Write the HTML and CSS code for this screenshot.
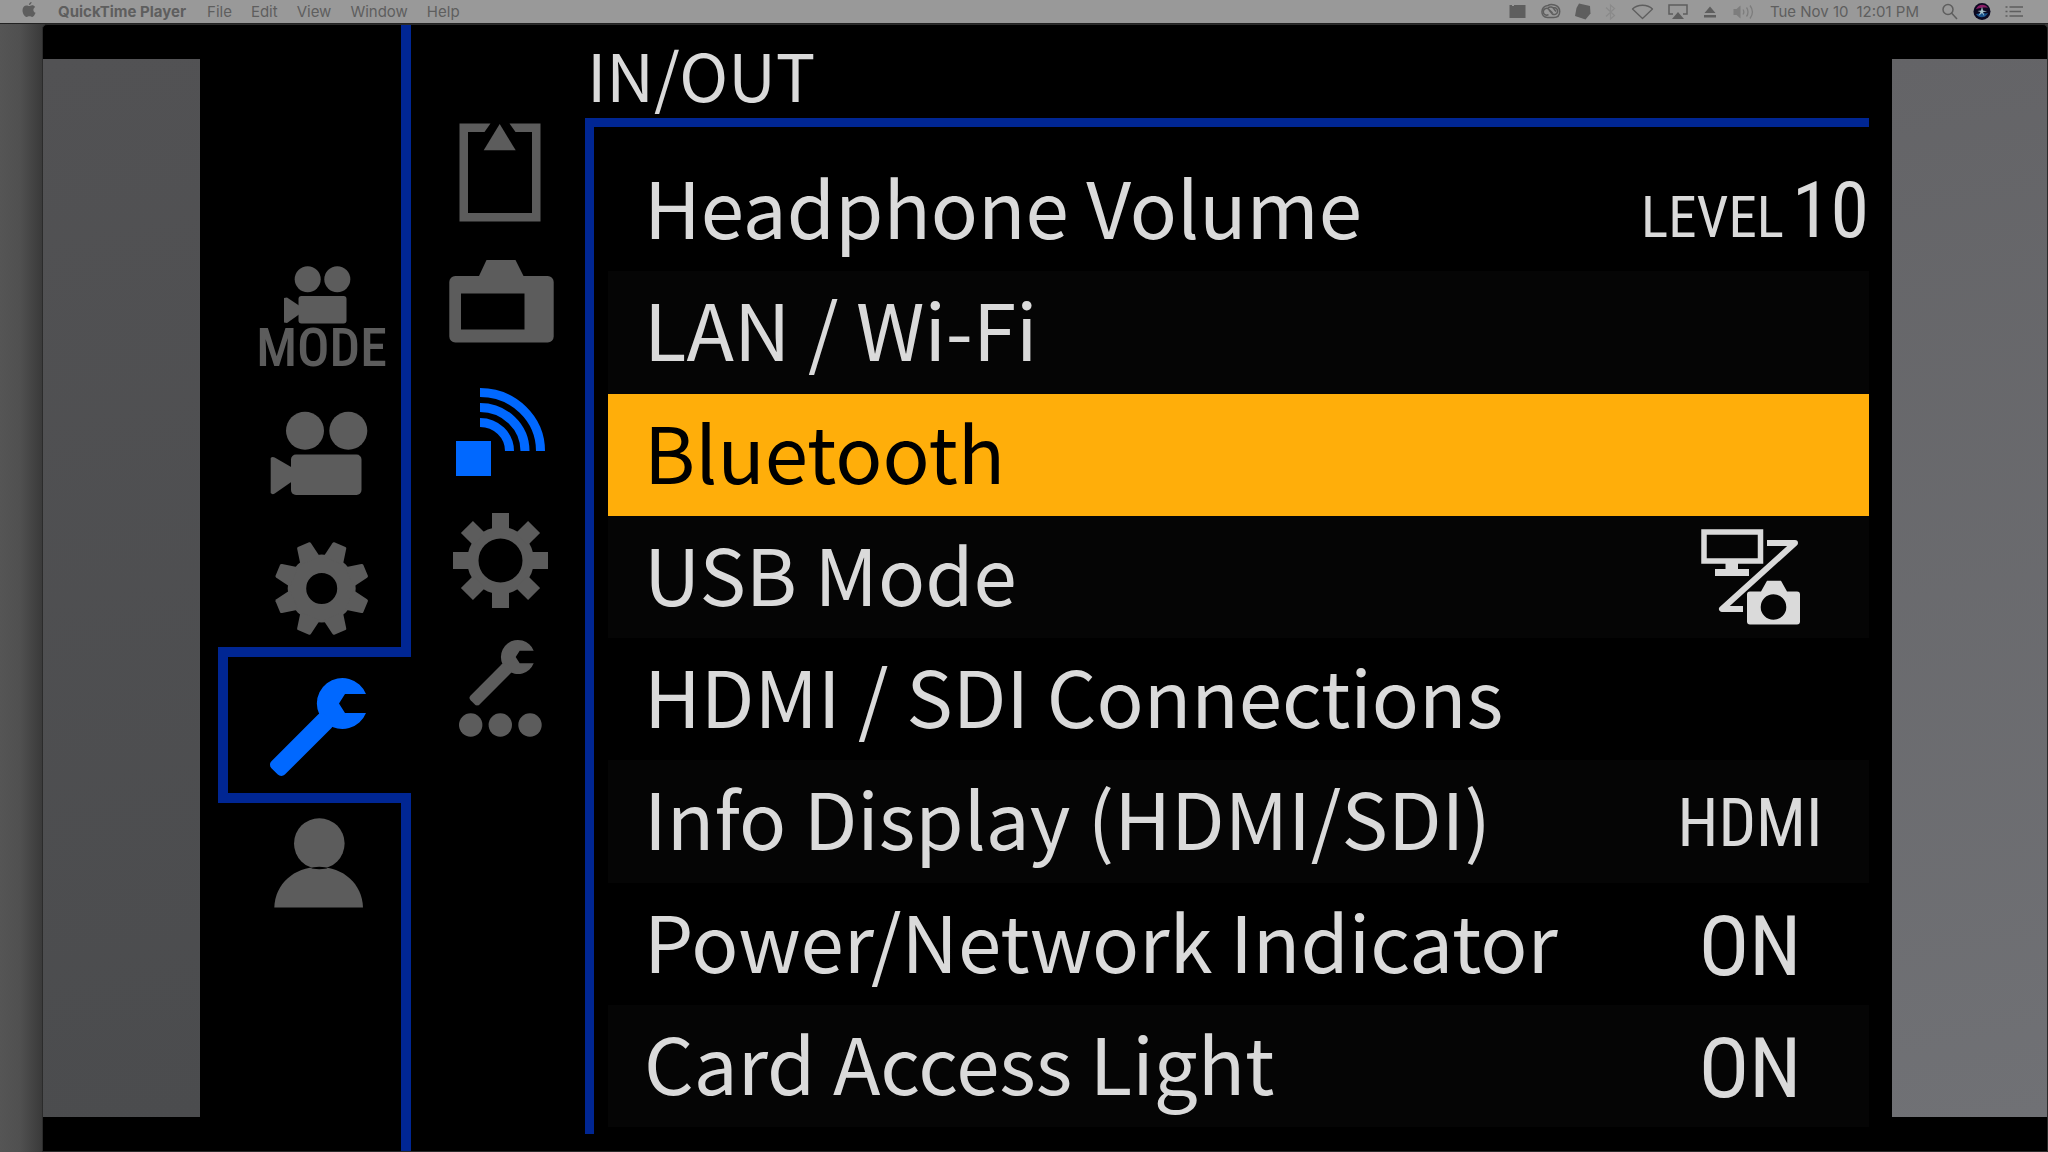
FILE: index.html
```html
<!DOCTYPE html>
<html lang="en">
<head>
<meta charset="utf-8">
<title>QuickTime Player</title>
<link rel="stylesheet" href="styles.css">
</head>
<body>
<svg class="defs" aria-hidden="true">
  <symbol id="wrench" viewBox="0 0 106 106">
    <path d="M101.500 23.500 A25.500 25.500 0 1 0 101.500 42.500 L80.500 42.500 L74.500 33 L80.500 23.500 Z"/>
    <rect x="20" y="-9.500" width="76" height="19" rx="5" transform="translate(78 33) rotate(135)"/>
  </symbol>
</svg>

<header class="menubar">
  <nav class="menus" aria-label="Menu bar">
    <button class="apple" aria-label="Apple">
      <svg width="14" height="18" viewBox="0 0 14 18"><path d="M9.600 1c.1 1.500-1.200 3-2.700 3-.1-1.500 1.200-2.900 2.700-3zM7.200 5c.7 0 1.500-.8 2.900-.8 1.200 0 2.400.7 3 1.700-2.500 1.500-2.100 4.900.5 5.900-.6 1.700-2 4.100-3.400 4.100-1.100 0-1.500-.7-2.800-.7s-1.700.7-2.700.7C2.600 16 .5 12.300.5 9.300.5 6.200 2.400 4.400 4.400 4.400c1.300 0 2.100.6 2.800.6z" fill="currentColor"/></svg>
    </button>
    <button class="app">QuickTime Player</button>
    <button>File</button>
    <button>Edit</button>
    <button>View</button>
    <button>Window</button>
    <button>Help</button>
  </nav>
  <div class="status">
    <svg width="19" height="20" viewBox="0 0 19 20"><path d="M1.500 5H4v1h2V5h11.500v13h-16z" fill="currentColor"/></svg>
    <svg width="21" height="20" viewBox="0 0 21 20" fill="none" stroke="currentColor" stroke-width="1.500"><path d="M8 5.500C10 4.200 19.500 3.500 19.700 11.500c0 3.500-2.200 6-6 6H7.500c-7.500 0-7.500-11 .5-12z"/><path d="M13 8.200c3-1.200 5 1 4.600 3.500-.4 2.600-3.600 3.800-5.600 1.900L9 10M8.500 14.700c-2.500 1.300-5.200-.3-5.200-3 0-2.800 3-4.200 5.200-2.700l4 4M8 8c2-2 5-1 6 1l2 2.500"/></svg>
    <svg width="17" height="20" viewBox="0 0 17 20"><path d="M5 3.500 16 6l.5 7.500-5 6L1 16l1.500-8z" fill="currentColor"/></svg>
    <svg class="faint" width="13" height="20" viewBox="0 0 13 20" fill="none" stroke="currentColor" stroke-width="1.200"><path d="M2 7.500l8.500 8L6.500 19V5l4 3.500-8.500 8"/></svg>
    <svg width="25" height="20" viewBox="0 0 25 20" fill="none" stroke="currentColor" stroke-width="1.300" stroke-linejoin="round"><path d="M2.500 9C7.500 4 17.500 4 22.500 9l-10 9.500z"/></svg>
    <svg width="20" height="20" viewBox="0 0 20 20"><path d="M5 14H1V5h18v9H15" fill="none" stroke="currentColor" stroke-width="1.500"/><path d="M10 12l6 7H4z" fill="currentColor"/></svg>
    <svg width="18" height="20" viewBox="0 0 18 20" fill="currentColor"><path d="M9 6.500l5.500 6.500h-11zM3 15h12v2.500H3z"/></svg>
    <svg class="dim" width="22" height="20" viewBox="0 0 22 20"><path d="M1.500 9h3l4-3.500v13L4.500 15h-3z" fill="currentColor"/><path d="M11 9.500c1 1.500 1 3.500 0 5M14.500 7.500c2 2.500 2 6.500 0 9M18 5.500c3 4 3 9 0 13" fill="none" stroke="currentColor" stroke-width="1.300"/></svg>
    <span class="clock"><span>Tue Nov 10</span><span>12:01 PM</span></span>
    <svg width="20" height="20" viewBox="0 0 20 20" fill="none" stroke="currentColor" stroke-width="1.500"><circle cx="8" cy="9.500" r="5"/><path d="M11.500 13l5.500 6"/></svg>
    <svg width="18" height="20" viewBox="0 0 18 20"><circle cx="9" cy="11.500" r="8.500" fill="#0b0820"/><path d="M3 9c2-5 9-6 12-1-4-1-8 0-12 1z" fill="#8a1c66"/><path d="M3 14c3 0 5-1 6-3 1 2 3 3 6 2-2 5-9 6-12 1z" fill="#17528c"/><path d="M9 6.500l1 4 4 1-4 .5 1.500 4.500L9 13l-3.500 3 2-4-3-1 3.500-.5z" fill="#a9c4cc"/></svg>
    <svg width="20" height="20" viewBox="0 0 20 20" fill="none" stroke="currentColor" stroke-width="1.700"><path d="M1.500 7h2M5.500 7H19M1.500 11.500h2M5.500 11.500H17M1.500 16h2M5.500 16H19"/></svg>
  </div>
</header>

<main class="desktop">
  <section class="player">
    <div class="backdrop backdrop-left"></div>

    <nav class="rail" aria-label="Menus">
      <div class="rail-space"></div>
      <button class="tab tab-mode">
        <svg width="159" height="86" viewBox="242 240 159 86" fill="currentColor"><circle cx="307.700" cy="279.300" r="13"/><circle cx="337.300" cy="279.300" r="13"/><rect x="298.500" y="296" width="48" height="27.500" rx="3"/><path d="M284 298l3-.5 12 8v9l-12 8.500-3-.5z"/></svg>
        <span>MODE</span>
      </button>
      <button class="tab" aria-label="Video recording">
        <svg width="159" height="130" viewBox="242 388 159 130" fill="currentColor"><circle cx="305" cy="430.700" r="19"/><circle cx="348.300" cy="430.700" r="19"/><rect x="291" y="454.500" width="70.500" height="40.500" rx="5"/><path d="M270.700 458q1.300-1.500 4-.5L292 467.500v14L274.700 493.500q-2.500 1.500-4-.5z"/></svg>
      </button>
      <button class="tab" aria-label="Custom settings">
        <svg width="159" height="129" viewBox="-79.700 -70.500 159 129" fill="currentColor">
          <path fill-rule="evenodd" d="M-34 0a34 34 0 1 0 68 0a34 34 0 1 0-68 0zM-15.500 0a15.500 15.500 0 1 1 31 0a15.500 15.500 0 1 1-31 0z"/>
          <g id="teeth-a"><path id="tooth-a" transform="rotate(22.500)" d="M-10.500-30L-7.500-46q.3-1.500 1.500-1.500H6q1.200 0 1.500 1.500L10.500-30z"/><use href="#tooth-a" transform="rotate(45)"/><use href="#tooth-a" transform="rotate(90)"/><use href="#tooth-a" transform="rotate(135)"/></g>
          <use href="#teeth-a" transform="rotate(180)"/>
        </svg>
      </button>
      <button class="tab tab-active" aria-label="Setup" aria-current="true">
        <svg width="159" height="136" viewBox="242 657 159 136" fill="currentColor"><use href="#wrench" x="264.500" y="670.500" width="106" height="106"/></svg>
      </button>
      <button class="tab" aria-label="My menu">
        <svg width="159" height="122" viewBox="242 803 159 122" fill="currentColor"><circle cx="319.300" cy="843.500" r="25.300"/><path d="M274.300 907.500C275 884 294 867 318.700 867S362.300 884 363 907.500z"/><ellipse cx="319.300" cy="868" rx="8" ry="1.200" fill="#000"/></svg>
      </button>
      <div class="rail-space rail-rest"></div>
    </nav>

    <nav class="sections" aria-label="Setup sections">
      <button aria-label="Memory card">
        <svg width="174" height="132" viewBox="411 108 174 132" fill="currentColor"><path d="M459.500 123.500h31l-6 8.500H468v81h64v-81h-16.500l-6-8.500h31v98h-81z"/><path d="M499.700 124l16 26.300h-32z"/></svg>
      </button>
      <button aria-label="Camera display">
        <svg width="174" height="126" viewBox="411 240 174 126" fill="currentColor"><path fill-rule="evenodd" d="M455.300 276H479l7.500-16h29l8 16h24.200a6 6 0 0 1 6 6v54.500a6 6 0 0 1-6 6h-92.400a6 6 0 0 1-6-6V282a6 6 0 0 1 6-6zM461 293.500v36h63.500v-36z"/></svg>
      </button>
      <button class="current" aria-label="In/Out" aria-current="true">
        <svg width="174" height="128" viewBox="411 366 174 128"><path d="M456 441h35v35h-35z" fill="currentColor"/><path d="M480 392.500A60.500 58.500 0 0 1 540.500 451M480 407.500A45 43.500 0 0 1 525 451M480 422.500A29.500 28.500 0 0 1 509.500 451" fill="none" stroke="currentColor" stroke-width="9"/></svg>
      </button>
      <button aria-label="Operation">
        <svg width="174" height="128" viewBox="-89.500 -66.500 174 128" fill="currentColor">
          <path fill-rule="evenodd" d="M-33.500 0a33.500 33.500 0 1 0 67 0a33.500 33.500 0 1 0-67 0zM-22 0a22 22 0 1 1 44 0a22 22 0 1 1-44 0z"/>
          <g id="teeth-b"><path id="tooth-b" d="M-8.500-30V-47.500h17V-30z"/><use href="#tooth-b" transform="rotate(45)"/><use href="#tooth-b" transform="rotate(90)"/><use href="#tooth-b" transform="rotate(135)"/></g>
          <use href="#teeth-b" transform="rotate(180)"/>
        </svg>
      </button>
      <button aria-label="Other settings">
        <svg width="174" height="128" viewBox="411 622 174 128" fill="currentColor"><use href="#wrench" x="466" y="635" width="70.700" height="70.700"/><circle cx="470.700" cy="725" r="11.700"/><circle cx="500.300" cy="725" r="11.700"/><circle cx="530" cy="725" r="11.700"/></svg>
      </button>
    </nav>

    <section class="panel">
      <h1>IN/OUT</h1>
      <div class="list">
        <button class="row"><span class="label">Headphone Volume</span><span class="value level"><small>LEVEL</small>10</span></button>
        <button class="row"><span class="label">LAN / Wi-Fi</span></button>
        <button class="row selected"><span class="label">Bluetooth</span></button>
        <button class="row"><span class="label">USB Mode</span><span class="value symbol">
          <svg width="104" height="100" viewBox="1698 527 104 100" role="img" aria-label="Computer / camera"><g fill="none" stroke="currentColor"><path d="M1704 532h56.500v29H1704z" stroke-width="5.500"/><path d="M1767 543h28l-73 66h21" stroke-width="6" stroke-linejoin="round"/></g><path d="M1725.500 562h12.500v7h11v7h-34v-7h10.500z" fill="currentColor"/><path fill-rule="evenodd" fill="currentColor" d="M1750 591.400h11l6-10.700h14l6 10.700h10a3 3 0 0 1 3 3v27.200a3 3 0 0 1-3 3h-47a3 3 0 0 1-3-3v-27.200a3 3 0 0 1 3-3zM1760.700 607a12.800 12.800 0 1 0 25.600 0a12.800 12.800 0 1 0-25.600 0z"/></svg></span></button>
        <button class="row"><span class="label">HDMI / SDI Connections</span></button>
        <button class="row"><span class="label">Info Display (HDMI/SDI)</span><span class="value narrow">HDMI</span></button>
        <button class="row"><span class="label">Power/Network Indicator</span><span class="value">ON</span></button>
        <button class="row"><span class="label">Card Access Light</span><span class="value">ON</span></button>
      </div>
    </section>

    <div class="backdrop backdrop-right"></div>
  </section>
</main>
</body>
</html>
```
FILE: styles.css
```css
* { box-sizing: border-box; }

body {
  margin: 0;
  min-height: 100vh;
  display: flex;
  flex-direction: column;
  background: #000;
  font-family: "Noto Sans CJK JP", "Noto Sans", sans-serif;
}

button {
  margin: 0;
  padding: 0;
  border: 0;
  background: none;
  color: inherit;
  font: inherit;
  text-align: left;
}

svg { display: block; flex: none; }
.defs { position: absolute; width: 0; height: 0; }

/* System menu bar */
.menubar {
  height: 24px;
  display: flex;
  justify-content: space-between;
  padding: 0 24px 0 22px;
  background: #999;
  border-bottom: 1px solid #222;
  color: #5e5e5e;
  font-family: Inter, sans-serif;
  font-size: 15px;
  line-height: 23px;
}
.menus { display: flex; gap: 19px; }
.apple { padding: 0 3px 3px 0; }
.app { padding-right: 2px; font-weight: 700; }
.status { display: flex; gap: 13px; }
.clock { display: flex; gap: 8px; padding: 0 8px 0 3px; white-space: nowrap; }
.faint { color: #8a8a8a; }
.dim { color: #7d7d7d; }

/* Desktop and player window */
.desktop {
  flex: 1;
  display: flex;
  padding-left: 42px;
  background: linear-gradient(90deg, #555 0, #505050 20px, #3a3a3a 42px);
}
.player {
  flex: 1;
  display: flex;
  background: #000;
  border: 1px solid #2b2b2b;
  border-radius: 5px 5px 0 0;
}
.backdrop { margin: 34px 0; }
.backdrop-left {
  width: 157px;
  background: linear-gradient(170deg, #525254, #4b4c4e);
}
.backdrop-right {
  width: 155px;
  background: linear-gradient(170deg, #646467, #707175);
}

/* Main menu rail */
.rail {
  width: 211px;
  display: flex;
  flex-direction: column;
  color: #5c5c5c;
}
.rail-space {
  height: 215px;
  border-right: 10px solid #002693;
}
.rail-rest { flex: 1; height: auto; }
.tab {
  padding-left: 42px;
  border-right: 10px solid #002693;
}
.tab-mode { padding-bottom: 18px; }
.tab-mode span {
  display: block;
  text-align: center;
  font: 500 54px/44px "Roboto Condensed", Roboto, sans-serif;
}
.tab-active {
  margin-left: 18px;
  padding-left: 14px;
  border: 10px solid #002693;
  border-right: 0;
  color: #0068ff;
}

.sections {
  width: 174px;
  padding-top: 83px;
  color: #5c5c5c;
}
.sections button { display: block; }
.sections .current { color: #0068ff; }

/* Settings list */
.panel {
  flex: 1;
  margin-right: 23px;
  display: flex;
  flex-direction: column;
  color: #dadada;
}
h1 {
  margin: 0;
  padding: 3px 0 0 2px;
  font-size: 66px;
  font-weight: 400;
  line-height: 90px;
}
.list {
  flex: 1;
  margin-bottom: 17px;
  padding: 22px 0 7px 14px;
  border-top: 9px solid #002693;
  border-left: 9px solid #002693;
  display: flex;
  flex-direction: column;
}
.row {
  flex: 1 0 100px;
  padding-left: 36px;
  display: flex;
  align-items: center;
  justify-content: space-between;
  font-size: 78px;
  line-height: 100px;
}
.row:nth-child(even) { background: #050505; }
.row.selected { background: #ffae0a; color: #000; }
.label { padding-bottom: 10px; white-space: nowrap; }
.value {
  width: 238px;
  padding-top: 6px;
  display: flex;
  align-items: baseline;
  justify-content: center;
  font-family: "Roboto Condensed", Roboto, sans-serif;
  font-size: 84px;
}
.symbol { padding-top: 0; }
.narrow { font-size: 66px; }
.level { padding: 8px 0 0 10px; gap: 8px; font-size: 78px; }
.level small { font-size: 57px; }
```
